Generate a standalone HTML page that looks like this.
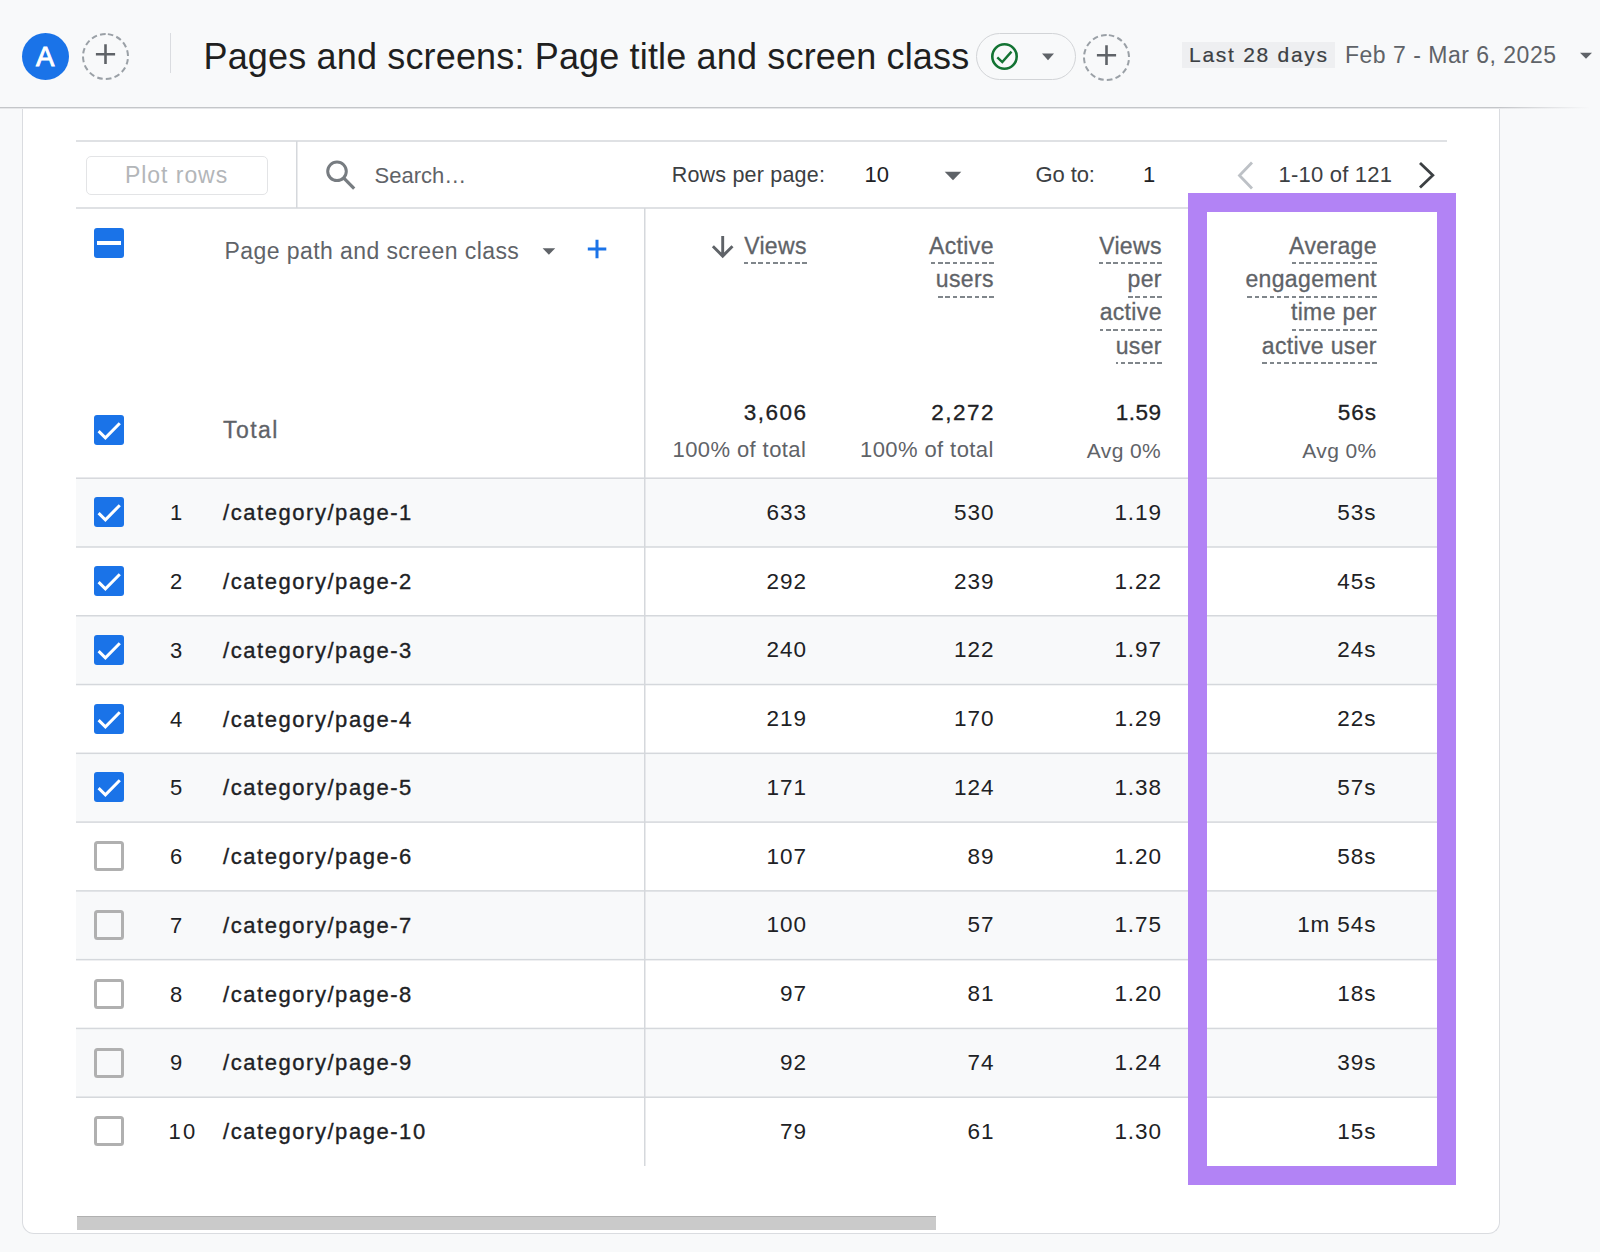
<!DOCTYPE html>
<html><head><meta charset="utf-8"><style>
*{margin:0;padding:0;box-sizing:border-box}
html,body{width:1600px;height:1252px;overflow:hidden;background:#f8f9fa;font-family:"Liberation Sans",sans-serif}
.a{position:absolute}
.t{position:absolute;white-space:nowrap}
.hl{position:absolute;height:1.5px;background:#dadce0}
.vl{position:absolute;width:1.5px;background:#dadce0}
.cb{position:absolute;left:94px;width:30px;height:30px;border-radius:3px;background:#1a73e8}
.cbo{position:absolute;left:94px;width:30px;height:30px;border-radius:3.5px;border:3px solid #b0b0b0;background:transparent}
.u{border-bottom:2px dashed #80868b}
</style></head><body>
<div class="a" style="left:0;top:0;width:1600px;height:107px;background:#f8f9fa"></div>
<div class="a" style="left:0;top:107px;width:1600px;height:1px;background:linear-gradient(90deg,#c4c6c9 0,#c4c6c9 1500px,#f8f9fa 1590px)"></div>
<div class="a" style="left:0;top:108px;width:1600px;height:1px;background:linear-gradient(90deg,#e6e7e9 0,#e6e7e9 1500px,#f8f9fa 1590px)"></div>
<div class="a" style="left:22px;top:33px;width:47px;height:47px;border-radius:50%;background:#1a73e8"></div>
<div class="t" style="top:42.72px;font-size:27.5px;line-height:27.5px;color:#ffffff;left:45.20px;transform:translateX(-50%);-webkit-text-stroke:0.9px #fff;">A</div>
<svg class="a" style="left:81.1px;top:31.7px" width="49" height="49" viewBox="0 0 49 49"><circle cx="24.5" cy="24.5" r="22.5" stroke="#9aa0a6" stroke-width="2" fill="none" stroke-dasharray="5.6 3.24" transform="rotate(-84 24.5 24.5)"/><path d="M24.5 12.2v19.9M14.9 22.2h19.2" stroke="#5f6368" stroke-width="2.6" fill="none"/></svg>
<div class="a" style="left:169.5px;top:33px;width:1.5px;height:40px;background:#dadce0"></div>
<div class="t" style="top:38.83px;font-size:36px;line-height:36px;color:#1f1f1f;letter-spacing:0.16px;left:203.50px;">Pages and screens: Page title and screen class</div>
<div class="a" style="left:976px;top:33px;width:100px;height:46.5px;border-radius:24px;border:1.5px solid #d2d4d7"></div>
<svg class="a" style="left:990px;top:42px" width="29" height="29" viewBox="0 0 29 29"><circle cx="14.5" cy="14.5" r="12.2" stroke="#137333" stroke-width="2.6" fill="none"/><path d="M7.3 15.3L12.3 20L21.5 9.6" stroke="#137333" stroke-width="2.4" fill="none"/></svg>
<svg class="a" style="left:1041px;top:53px" width="14" height="8" viewBox="0 0 14 8"><path d="M1 0.6h12l-6 6.6z" fill="#5f6368"/></svg>
<svg class="a" style="left:1082.1px;top:32.7px" width="49" height="49" viewBox="0 0 49 49"><circle cx="24.5" cy="24.5" r="22.5" stroke="#9aa0a6" stroke-width="2" fill="none" stroke-dasharray="5.6 3.24" transform="rotate(-84 24.5 24.5)"/><path d="M24.5 12.2v19.9M14.9 22.2h19.2" stroke="#5f6368" stroke-width="2.6" fill="none"/></svg>
<div class="a" style="left:1182px;top:42px;width:153px;height:25.5px;background:#eeeff1"></div>
<div class="t" style="top:44.22px;font-size:21px;line-height:21px;color:#3c4043;letter-spacing:1.72px;left:1189.00px;-webkit-text-stroke:0.2px #3c4043;">Last 28 days</div>
<div class="t" style="top:43.53px;font-size:23px;line-height:23px;color:#5f6368;letter-spacing:0.5px;left:1345.00px;">Feb 7 - Mar 6, 2025</div>
<svg class="a" style="left:1579px;top:52px" width="14" height="8" viewBox="0 0 14 8"><path d="M1 0.8h12l-6 6z" fill="#5f6368"/></svg>
<div class="a" style="left:22px;top:109px;width:1478px;height:1124.5px;background:#fff;border:1.5px solid #dadce0;border-top:none;border-radius:0 0 12px 12px"></div>
<svg class="a" style="left:0;top:0" width="1600" height="1252" viewBox="0 0 1600 1252"><rect x="76" y="478.20" width="1371" height="68.78" fill="#f8f9fa"/><rect x="76" y="615.76" width="1371" height="68.78" fill="#f8f9fa"/><rect x="76" y="753.32" width="1371" height="68.78" fill="#f8f9fa"/><rect x="76" y="890.88" width="1371" height="68.78" fill="#f8f9fa"/><rect x="76" y="1028.44" width="1371" height="68.78" fill="#f8f9fa"/><rect x="76" y="140.25" width="1371" height="1.5" fill="#d5d8dc"/><rect x="76" y="207.25" width="1371" height="1.5" fill="#d5d8dc"/><rect x="76" y="477.45" width="1371" height="1.5" fill="#d5d8dc"/><rect x="76" y="546.23" width="1371" height="1.5" fill="#d5d8dc"/><rect x="76" y="615.01" width="1371" height="1.5" fill="#d5d8dc"/><rect x="76" y="683.79" width="1371" height="1.5" fill="#d5d8dc"/><rect x="76" y="752.57" width="1371" height="1.5" fill="#d5d8dc"/><rect x="76" y="821.35" width="1371" height="1.5" fill="#d5d8dc"/><rect x="76" y="890.13" width="1371" height="1.5" fill="#d5d8dc"/><rect x="76" y="958.91" width="1371" height="1.5" fill="#d5d8dc"/><rect x="76" y="1027.69" width="1371" height="1.5" fill="#d5d8dc"/><rect x="76" y="1096.47" width="1371" height="1.5" fill="#d5d8dc"/><rect x="296" y="141" width="1.5" height="67" fill="#d5d8dc"/><rect x="644" y="208" width="1.5" height="958.00" fill="#d5d8dc"/></svg>
<div class="a" style="left:86px;top:156px;width:182px;height:38.5px;border:1.5px solid #e3e4e6;border-radius:5px"></div>
<div class="t" style="top:164.28px;font-size:23px;line-height:23px;color:#b3b6b9;letter-spacing:0.95px;left:125.00px;">Plot rows</div>
<svg class="a" style="left:324px;top:158px" width="34" height="34" viewBox="0 0 34 34"><circle cx="13" cy="13.3" r="9.3" stroke="#777c81" stroke-width="3" fill="none"/><path d="M19.6 19.9l10.6 10.8" stroke="#777c81" stroke-width="3.2"/></svg>
<div class="t" style="top:165.13px;font-size:22px;line-height:22px;color:#5f6368;left:374.50px;">Search…</div>
<div class="t" style="top:164.80px;font-size:21.5px;line-height:21.5px;color:#3c4043;letter-spacing:0.2px;left:671.70px;">Rows per page:</div>
<div class="t" style="top:164.38px;font-size:22px;line-height:22px;color:#202124;left:864.50px;">10</div>
<svg class="a" style="left:944px;top:171px" width="18" height="10" viewBox="0 0 18 10"><path d="M0.7 0.7h16.6l-8.3 8.5z" fill="#5f6368"/></svg>
<div class="t" style="top:163.88px;font-size:22px;line-height:22px;color:#3c4043;letter-spacing:-0.1px;left:1035.50px;">Go to:</div>
<div class="t" style="top:163.68px;font-size:22px;line-height:22px;color:#202124;left:1143.00px;">1</div>
<svg class="a" style="left:1234px;top:160px" width="22" height="31" viewBox="0 0 22 31"><path d="M18 2.5L5.5 15.5L18 28.5" stroke="#bdc1c6" stroke-width="2.8" fill="none"/></svg>
<div class="t" style="top:163.68px;font-size:22px;line-height:22px;color:#3c4043;letter-spacing:0.22px;left:1278.50px;">1-10 of 121</div>
<svg class="a" style="left:1416px;top:160px" width="22" height="31" viewBox="0 0 22 31"><path d="M4 3L16.8 15.3L4 27.5" stroke="#3c4043" stroke-width="2.8" fill="none"/></svg>
<div class="cb" style="top:227.5px"><div class="a" style="left:3px;top:13px;width:24px;height:4px;background:#fff"></div></div>
<div class="t" style="top:239.53px;font-size:23px;line-height:23px;color:#5f6368;letter-spacing:0.42px;left:224.50px;">Page path and screen class</div>
<svg class="a" style="left:542px;top:248px" width="14" height="8" viewBox="0 0 14 8"><path d="M0.6 0.3h12.6l-6.3 6.5z" fill="#5f6368"/></svg>
<svg class="a" style="left:586px;top:238px" width="22" height="22" viewBox="0 0 22 22"><path d="M11 1.8v18.5M1.8 11h18.5" stroke="#1a73e8" stroke-width="3" fill="none"/></svg>
<svg class="a" style="left:711px;top:235px" width="23" height="24" viewBox="0 0 23 24"><path d="M11.7 1v19.5M1.9 11.3L11.7 21.1L21.5 11.3" stroke="#5f6368" stroke-width="2.9" fill="none"/></svg>
<div class="t" style="top:234.53px;font-size:23px;line-height:23px;color:#5f6368;letter-spacing:0.35px;right:793.20px;-webkit-text-stroke:0.3px #5f6368;padding-bottom:6.6px;background:repeating-linear-gradient(to left,#80868b 0 4.6px,transparent 4.6px 7.35px) left bottom/100% 2px no-repeat;">Views</div>
<div class="t" style="top:234.53px;font-size:23px;line-height:23px;color:#5f6368;letter-spacing:0.35px;right:606.20px;-webkit-text-stroke:0.3px #5f6368;padding-bottom:6.6px;background:repeating-linear-gradient(to left,#80868b 0 4.6px,transparent 4.6px 7.35px) left bottom/100% 2px no-repeat;">Active</div>
<div class="t" style="top:267.93px;font-size:23px;line-height:23px;color:#5f6368;letter-spacing:0.35px;right:606.20px;-webkit-text-stroke:0.3px #5f6368;padding-bottom:6.6px;background:repeating-linear-gradient(to left,#80868b 0 4.6px,transparent 4.6px 7.35px) left bottom/100% 2px no-repeat;">users</div>
<div class="t" style="top:234.53px;font-size:23px;line-height:23px;color:#5f6368;letter-spacing:0.35px;right:438.20px;-webkit-text-stroke:0.3px #5f6368;padding-bottom:6.6px;background:repeating-linear-gradient(to left,#80868b 0 4.6px,transparent 4.6px 7.35px) left bottom/100% 2px no-repeat;">Views</div>
<div class="t" style="top:267.93px;font-size:23px;line-height:23px;color:#5f6368;letter-spacing:0.35px;right:438.20px;-webkit-text-stroke:0.3px #5f6368;padding-bottom:6.6px;background:repeating-linear-gradient(to left,#80868b 0 4.6px,transparent 4.6px 7.35px) left bottom/100% 2px no-repeat;">per</div>
<div class="t" style="top:301.13px;font-size:23px;line-height:23px;color:#5f6368;letter-spacing:0.35px;right:438.20px;-webkit-text-stroke:0.3px #5f6368;padding-bottom:6.6px;background:repeating-linear-gradient(to left,#80868b 0 4.6px,transparent 4.6px 7.35px) left bottom/100% 2px no-repeat;">active</div>
<div class="t" style="top:334.53px;font-size:23px;line-height:23px;color:#5f6368;letter-spacing:0.35px;right:438.20px;-webkit-text-stroke:0.3px #5f6368;padding-bottom:6.6px;background:repeating-linear-gradient(to left,#80868b 0 4.6px,transparent 4.6px 7.35px) left bottom/100% 2px no-repeat;">user</div>
<div class="t" style="top:234.53px;font-size:23px;line-height:23px;color:#5f6368;letter-spacing:0.35px;right:223.20px;-webkit-text-stroke:0.3px #5f6368;padding-bottom:6.6px;background:repeating-linear-gradient(to left,#80868b 0 4.6px,transparent 4.6px 7.35px) left bottom/100% 2px no-repeat;">Average</div>
<div class="t" style="top:267.93px;font-size:23px;line-height:23px;color:#5f6368;letter-spacing:0.35px;right:223.20px;-webkit-text-stroke:0.3px #5f6368;padding-bottom:6.6px;background:repeating-linear-gradient(to left,#80868b 0 4.6px,transparent 4.6px 7.35px) left bottom/100% 2px no-repeat;">engagement</div>
<div class="t" style="top:301.13px;font-size:23px;line-height:23px;color:#5f6368;letter-spacing:0.35px;right:223.20px;-webkit-text-stroke:0.3px #5f6368;padding-bottom:6.6px;background:repeating-linear-gradient(to left,#80868b 0 4.6px,transparent 4.6px 7.35px) left bottom/100% 2px no-repeat;">time per</div>
<div class="t" style="top:334.53px;font-size:23px;line-height:23px;color:#5f6368;letter-spacing:0.35px;right:223.20px;-webkit-text-stroke:0.3px #5f6368;padding-bottom:6.6px;background:repeating-linear-gradient(to left,#80868b 0 4.6px,transparent 4.6px 7.35px) left bottom/100% 2px no-repeat;">active user</div>
<div class="cb" style="top:415px"><svg class="a" style="left:0;top:0" width="30" height="30" viewBox="0 0 30 30"><path d="M4.6 16.2L11.4 22.8L25.8 8.2" stroke="#fff" stroke-width="3" fill="none"/></svg></div>
<div class="t" style="top:418.73px;font-size:23px;line-height:23px;color:#5f6368;letter-spacing:1.45px;left:223.00px;-webkit-text-stroke:0.3px #5f6368;">Total</div>
<div class="t" style="top:402.45px;font-size:22.5px;line-height:22.5px;color:#202124;letter-spacing:1.45px;right:792.60px;-webkit-text-stroke:0.3px #202124;">3,606</div>
<div class="t" style="top:439.38px;font-size:22px;line-height:22px;color:#5f6368;letter-spacing:0.4px;right:793.80px;">100% of total</div>
<div class="t" style="top:402.45px;font-size:22.5px;line-height:22.5px;color:#202124;letter-spacing:1.45px;right:605.10px;-webkit-text-stroke:0.3px #202124;">2,272</div>
<div class="t" style="top:439.38px;font-size:22px;line-height:22px;color:#5f6368;letter-spacing:0.4px;right:606.30px;">100% of total</div>
<div class="t" style="top:402.45px;font-size:22.5px;line-height:22.5px;color:#202124;letter-spacing:0.5px;right:438.50px;-webkit-text-stroke:0.3px #202124;">1.59</div>
<div class="t" style="top:440.22px;font-size:21px;line-height:21px;color:#5f6368;letter-spacing:0.4px;right:438.80px;">Avg 0%</div>
<div class="t" style="top:402.45px;font-size:22.5px;line-height:22.5px;color:#202124;letter-spacing:1.0px;right:223.00px;-webkit-text-stroke:0.3px #202124;">56s</div>
<div class="t" style="top:440.22px;font-size:21px;line-height:21px;color:#5f6368;letter-spacing:0.4px;right:223.30px;">Avg 0%</div>
<div class="cb" style="top:497.3px"><svg class="a" style="left:0;top:0" width="30" height="30" viewBox="0 0 30 30"><path d="M4.6 16.2L11.4 22.8L25.8 8.2" stroke="#fff" stroke-width="3" fill="none"/></svg></div>
<div class="t" style="top:502.17px;font-size:22px;line-height:22px;color:#202124;letter-spacing:0.5px;left:170.00px;">1</div>
<div class="t" style="top:502.17px;font-size:22px;line-height:22px;color:#202124;letter-spacing:1.55px;left:223.00px;-webkit-text-stroke:0.35px #202124;">/category/page-1</div>
<div class="t" style="top:501.74px;font-size:22.5px;line-height:22.5px;color:#202124;letter-spacing:0.9px;right:793.20px;">633</div>
<div class="t" style="top:501.74px;font-size:22.5px;line-height:22.5px;color:#202124;letter-spacing:0.9px;right:605.70px;">530</div>
<div class="t" style="top:501.74px;font-size:22.5px;line-height:22.5px;color:#202124;letter-spacing:0.9px;right:438.20px;">1.19</div>
<div class="t" style="top:501.74px;font-size:22.5px;line-height:22.5px;color:#202124;letter-spacing:0.9px;right:223.70px;">53s</div>
<div class="cb" style="top:566.1px"><svg class="a" style="left:0;top:0" width="30" height="30" viewBox="0 0 30 30"><path d="M4.6 16.2L11.4 22.8L25.8 8.2" stroke="#fff" stroke-width="3" fill="none"/></svg></div>
<div class="t" style="top:570.95px;font-size:22px;line-height:22px;color:#202124;letter-spacing:0.5px;left:170.00px;">2</div>
<div class="t" style="top:570.95px;font-size:22px;line-height:22px;color:#202124;letter-spacing:1.55px;left:223.00px;-webkit-text-stroke:0.35px #202124;">/category/page-2</div>
<div class="t" style="top:570.52px;font-size:22.5px;line-height:22.5px;color:#202124;letter-spacing:0.9px;right:793.20px;">292</div>
<div class="t" style="top:570.52px;font-size:22.5px;line-height:22.5px;color:#202124;letter-spacing:0.9px;right:605.70px;">239</div>
<div class="t" style="top:570.52px;font-size:22.5px;line-height:22.5px;color:#202124;letter-spacing:0.9px;right:438.20px;">1.22</div>
<div class="t" style="top:570.52px;font-size:22.5px;line-height:22.5px;color:#202124;letter-spacing:0.9px;right:223.70px;">45s</div>
<div class="cb" style="top:634.9px"><svg class="a" style="left:0;top:0" width="30" height="30" viewBox="0 0 30 30"><path d="M4.6 16.2L11.4 22.8L25.8 8.2" stroke="#fff" stroke-width="3" fill="none"/></svg></div>
<div class="t" style="top:639.73px;font-size:22px;line-height:22px;color:#202124;letter-spacing:0.5px;left:170.00px;">3</div>
<div class="t" style="top:639.73px;font-size:22px;line-height:22px;color:#202124;letter-spacing:1.55px;left:223.00px;-webkit-text-stroke:0.35px #202124;">/category/page-3</div>
<div class="t" style="top:639.30px;font-size:22.5px;line-height:22.5px;color:#202124;letter-spacing:0.9px;right:793.20px;">240</div>
<div class="t" style="top:639.30px;font-size:22.5px;line-height:22.5px;color:#202124;letter-spacing:0.9px;right:605.70px;">122</div>
<div class="t" style="top:639.30px;font-size:22.5px;line-height:22.5px;color:#202124;letter-spacing:0.9px;right:438.20px;">1.97</div>
<div class="t" style="top:639.30px;font-size:22.5px;line-height:22.5px;color:#202124;letter-spacing:0.9px;right:223.70px;">24s</div>
<div class="cb" style="top:703.6px"><svg class="a" style="left:0;top:0" width="30" height="30" viewBox="0 0 30 30"><path d="M4.6 16.2L11.4 22.8L25.8 8.2" stroke="#fff" stroke-width="3" fill="none"/></svg></div>
<div class="t" style="top:708.51px;font-size:22px;line-height:22px;color:#202124;letter-spacing:0.5px;left:170.00px;">4</div>
<div class="t" style="top:708.51px;font-size:22px;line-height:22px;color:#202124;letter-spacing:1.55px;left:223.00px;-webkit-text-stroke:0.35px #202124;">/category/page-4</div>
<div class="t" style="top:708.08px;font-size:22.5px;line-height:22.5px;color:#202124;letter-spacing:0.9px;right:793.20px;">219</div>
<div class="t" style="top:708.08px;font-size:22.5px;line-height:22.5px;color:#202124;letter-spacing:0.9px;right:605.70px;">170</div>
<div class="t" style="top:708.08px;font-size:22.5px;line-height:22.5px;color:#202124;letter-spacing:0.9px;right:438.20px;">1.29</div>
<div class="t" style="top:708.08px;font-size:22.5px;line-height:22.5px;color:#202124;letter-spacing:0.9px;right:223.70px;">22s</div>
<div class="cb" style="top:772.4px"><svg class="a" style="left:0;top:0" width="30" height="30" viewBox="0 0 30 30"><path d="M4.6 16.2L11.4 22.8L25.8 8.2" stroke="#fff" stroke-width="3" fill="none"/></svg></div>
<div class="t" style="top:777.29px;font-size:22px;line-height:22px;color:#202124;letter-spacing:0.5px;left:170.00px;">5</div>
<div class="t" style="top:777.29px;font-size:22px;line-height:22px;color:#202124;letter-spacing:1.55px;left:223.00px;-webkit-text-stroke:0.35px #202124;">/category/page-5</div>
<div class="t" style="top:776.86px;font-size:22.5px;line-height:22.5px;color:#202124;letter-spacing:0.9px;right:793.20px;">171</div>
<div class="t" style="top:776.86px;font-size:22.5px;line-height:22.5px;color:#202124;letter-spacing:0.9px;right:605.70px;">124</div>
<div class="t" style="top:776.86px;font-size:22.5px;line-height:22.5px;color:#202124;letter-spacing:0.9px;right:438.20px;">1.38</div>
<div class="t" style="top:776.86px;font-size:22.5px;line-height:22.5px;color:#202124;letter-spacing:0.9px;right:223.70px;">57s</div>
<div class="cbo" style="top:841.2px"></div>
<div class="t" style="top:846.07px;font-size:22px;line-height:22px;color:#202124;letter-spacing:0.5px;left:170.00px;">6</div>
<div class="t" style="top:846.07px;font-size:22px;line-height:22px;color:#202124;letter-spacing:1.55px;left:223.00px;-webkit-text-stroke:0.35px #202124;">/category/page-6</div>
<div class="t" style="top:845.64px;font-size:22.5px;line-height:22.5px;color:#202124;letter-spacing:0.9px;right:793.20px;">107</div>
<div class="t" style="top:845.64px;font-size:22.5px;line-height:22.5px;color:#202124;letter-spacing:0.9px;right:605.70px;">89</div>
<div class="t" style="top:845.64px;font-size:22.5px;line-height:22.5px;color:#202124;letter-spacing:0.9px;right:438.20px;">1.20</div>
<div class="t" style="top:845.64px;font-size:22.5px;line-height:22.5px;color:#202124;letter-spacing:0.9px;right:223.70px;">58s</div>
<div class="cbo" style="top:910.0px"></div>
<div class="t" style="top:914.85px;font-size:22px;line-height:22px;color:#202124;letter-spacing:0.5px;left:170.00px;">7</div>
<div class="t" style="top:914.85px;font-size:22px;line-height:22px;color:#202124;letter-spacing:1.55px;left:223.00px;-webkit-text-stroke:0.35px #202124;">/category/page-7</div>
<div class="t" style="top:914.42px;font-size:22.5px;line-height:22.5px;color:#202124;letter-spacing:0.9px;right:793.20px;">100</div>
<div class="t" style="top:914.42px;font-size:22.5px;line-height:22.5px;color:#202124;letter-spacing:0.9px;right:605.70px;">57</div>
<div class="t" style="top:914.42px;font-size:22.5px;line-height:22.5px;color:#202124;letter-spacing:0.9px;right:438.20px;">1.75</div>
<div class="t" style="top:914.42px;font-size:22.5px;line-height:22.5px;color:#202124;letter-spacing:0.9px;right:223.70px;">1m 54s</div>
<div class="cbo" style="top:978.8px"></div>
<div class="t" style="top:983.63px;font-size:22px;line-height:22px;color:#202124;letter-spacing:0.5px;left:170.00px;">8</div>
<div class="t" style="top:983.63px;font-size:22px;line-height:22px;color:#202124;letter-spacing:1.55px;left:223.00px;-webkit-text-stroke:0.35px #202124;">/category/page-8</div>
<div class="t" style="top:983.20px;font-size:22.5px;line-height:22.5px;color:#202124;letter-spacing:0.9px;right:793.20px;">97</div>
<div class="t" style="top:983.20px;font-size:22.5px;line-height:22.5px;color:#202124;letter-spacing:0.9px;right:605.70px;">81</div>
<div class="t" style="top:983.20px;font-size:22.5px;line-height:22.5px;color:#202124;letter-spacing:0.9px;right:438.20px;">1.20</div>
<div class="t" style="top:983.20px;font-size:22.5px;line-height:22.5px;color:#202124;letter-spacing:0.9px;right:223.70px;">18s</div>
<div class="cbo" style="top:1047.5px"></div>
<div class="t" style="top:1052.41px;font-size:22px;line-height:22px;color:#202124;letter-spacing:0.5px;left:170.00px;">9</div>
<div class="t" style="top:1052.41px;font-size:22px;line-height:22px;color:#202124;letter-spacing:1.55px;left:223.00px;-webkit-text-stroke:0.35px #202124;">/category/page-9</div>
<div class="t" style="top:1051.98px;font-size:22.5px;line-height:22.5px;color:#202124;letter-spacing:0.9px;right:793.20px;">92</div>
<div class="t" style="top:1051.98px;font-size:22.5px;line-height:22.5px;color:#202124;letter-spacing:0.9px;right:605.70px;">74</div>
<div class="t" style="top:1051.98px;font-size:22.5px;line-height:22.5px;color:#202124;letter-spacing:0.9px;right:438.20px;">1.24</div>
<div class="t" style="top:1051.98px;font-size:22.5px;line-height:22.5px;color:#202124;letter-spacing:0.9px;right:223.70px;">39s</div>
<div class="cbo" style="top:1116.3px"></div>
<div class="t" style="top:1121.19px;font-size:22px;line-height:22px;color:#202124;letter-spacing:2.2px;left:168.50px;">10</div>
<div class="t" style="top:1121.19px;font-size:22px;line-height:22px;color:#202124;letter-spacing:1.55px;left:223.00px;-webkit-text-stroke:0.35px #202124;">/category/page-10</div>
<div class="t" style="top:1120.76px;font-size:22.5px;line-height:22.5px;color:#202124;letter-spacing:0.9px;right:793.20px;">79</div>
<div class="t" style="top:1120.76px;font-size:22.5px;line-height:22.5px;color:#202124;letter-spacing:0.9px;right:605.70px;">61</div>
<div class="t" style="top:1120.76px;font-size:22.5px;line-height:22.5px;color:#202124;letter-spacing:0.9px;right:438.20px;">1.30</div>
<div class="t" style="top:1120.76px;font-size:22.5px;line-height:22.5px;color:#202124;letter-spacing:0.9px;right:223.70px;">15s</div>
<div class="a" style="left:1188px;top:193px;width:268px;height:992px;border:19px solid #b283f5"></div>
<div class="a" style="left:77px;top:1215.5px;width:859px;height:14.5px;background:#cacaca;border-top:1.5px solid #b0b0b0"></div>
</body></html>
